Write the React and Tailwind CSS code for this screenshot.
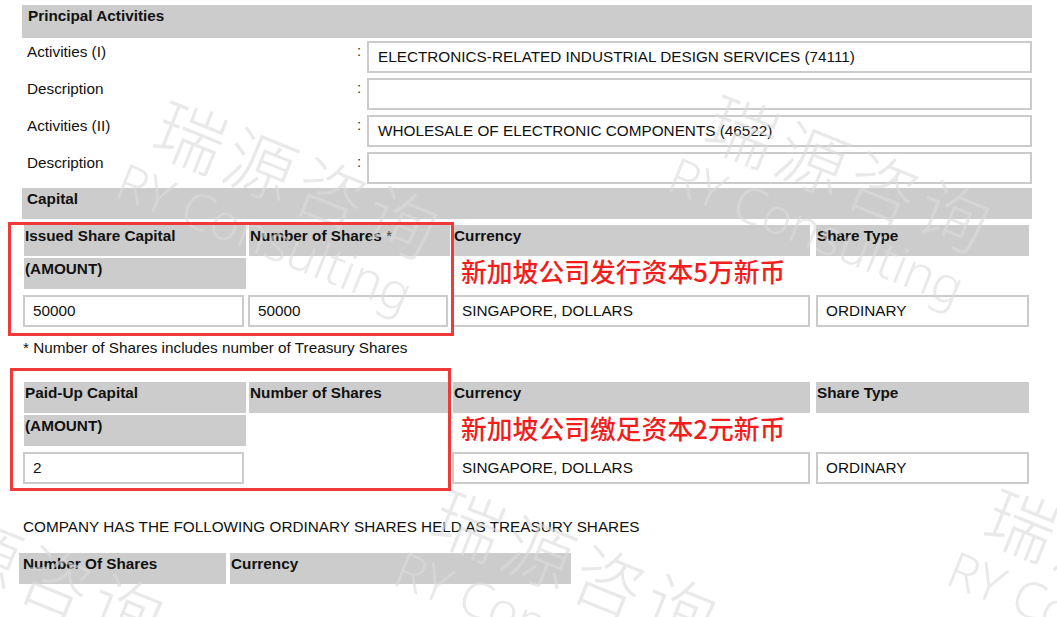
import React from 'react';

const FONT = { fontFamily: '"Liberation Sans", Arial, sans-serif' };
const CJK = { fontFamily: '"Noto Sans CJK SC", "Noto Sans", sans-serif' };
const MARK = { fontFamily: '"Noto Sans", "Noto Sans CJK SC", sans-serif' };

const activities = [
  { label: 'Activities (I)', value: 'ELECTRONICS-RELATED INDUSTRIAL DESIGN SERVICES (74111)' },
  { label: 'Description', value: '' },
  { label: 'Activities (II)', value: 'WHOLESALE OF ELECTRONIC COMPONENTS (46522)' },
  { label: 'Description', value: '' },
];

const Head = ({ children, className = '' }) => (
  <div className={`bg-[#cccccc] h-[31px] pl-[1px] pt-[2px] text-[15.3px] font-bold leading-[18px] text-[#111] ${className}`}>
    {children}
  </div>
);

const Box = ({ children, className = '' }) => (
  <div className={`h-[32px] border-2 border-[#cbcbcb] bg-white flex items-center pl-[8px] text-[15.3px] text-[#111] ${className}`}>
    {children}
  </div>
);

// faint diagonal "瑞源咨询 / RY Consulting" stamp laid over the page
const Watermark = ({ className }) => (
  <div className={`absolute pointer-events-none select-none origin-top-left rotate-[22deg] text-[#dadada]/60 whitespace-nowrap ${className}`}>
    <div className="text-[70px] font-light leading-[70px] tracking-[6px]" style={CJK}>瑞源咨询</div>
    <div className="text-[50px] font-light leading-[50px] mt-[8px] -ml-[15px]" style={MARK}>RY Consulting</div>
  </div>
);

const CapitalTable = ({ title, sharesTitle, amount, shares, note, boxClass }) => (
  <div className="relative">
    <div className={`absolute border-[3px] border-[#f03a3a] pointer-events-none z-10 ${boxClass}`} />
    <div className="grid grid-cols-[222px_201px_357px_216px] gap-x-[3px] ml-[24px]">
      <Head>{title}</Head>
      <Head>{sharesTitle}</Head>
      <Head>Currency</Head>
      <Head className="ml-[3px]">Share Type</Head>

      <Head className="mt-[2px]">(AMOUNT)</Head>
      <div className="mt-[2px]" />
      <div className="mt-[2px] relative">
        <div className="absolute left-[8px] top-[-3px] whitespace-nowrap text-[25.8px] font-medium leading-[32px] text-[#f31d1d]" style={CJK}>
          {note}
        </div>
      </div>
      <div className="mt-[2px]" />

      <Box className="mt-[6px] -ml-[1px] mr-[2px]">{amount}</Box>
      {shares !== null ? <Box className="mt-[6px] -ml-[1px] mr-[2px]">{shares}</Box> : <div className="mt-[6px]" />}
      <Box className="mt-[6px] -ml-[1px]">SINGAPORE, DOLLARS</Box>
      <Box className="mt-[6px] ml-[3px]">ORDINARY</Box>
    </div>
  </div>
);

export default function App() {
  return (
    <div className="relative w-[1057px] h-[617px] overflow-hidden bg-white" style={FONT}>
      <div className="pt-[5px]">
        <div className="ml-[22px] w-[1010px]">
          <Head className="h-[33px] pl-[6px]">Principal Activities</Head>

          <div className="mt-[3px] flex flex-col gap-[5px]">
            {activities.map((a, i) => (
              <div key={i} className="flex h-[32px]">
                <div className="w-[335px] pl-[5px] pt-[2px] text-[15.3px] text-[#111] leading-[18px]">{a.label}</div>
                <div className="w-[10px] pt-[1px] text-[15px] text-[#333] leading-[18px]">:</div>
                <Box className="flex-1 pl-[9px]">{a.value}</Box>
              </div>
            ))}
          </div>

          <Head className="mt-[4px] h-[30px] pl-[5px]">Capital</Head>
        </div>

        <div className="mt-[6px]">
          <CapitalTable
            title="Issued Share Capital"
            sharesTitle={<span>Number of Shares <span className="font-normal text-[#444]">*</span></span>}
            amount="50000"
            shares="50000"
            note="新加坡公司发行资本5万新币"
            boxClass="left-[8px] top-[-3px] w-[446px] h-[114px]"
          />
        </div>

        <div className="ml-[23px] mt-[12px] text-[15.3px] leading-[18px] text-[#111]">
          * Number of Shares includes number of Treasury Shares
        </div>

        <div className="mt-[25px]">
          <CapitalTable
            title="Paid-Up Capital"
            sharesTitle="Number of Shares"
            amount="2"
            shares={null}
            note="新加坡公司缴足资本2元新币"
            boxClass="left-[10px] top-[-14px] w-[441px] h-[123px]"
          />
        </div>

        <div className="ml-[23px] mt-[34px] text-[15.3px] leading-[18px] text-[#111]">
          COMPANY HAS THE FOLLOWING ORDINARY SHARES HELD AS TREASURY SHARES
        </div>

        <div className="ml-[19px] mt-[17px] grid grid-cols-[207px_341px] gap-x-[4px]">
          <Head className="pl-[4px]">Number Of Shares</Head>
          <Head>Currency</Head>
        </div>
      </div>

      <Watermark className="left-[172px] top-[88px]" />
      <Watermark className="left-[724px] top-[82px]" />
      <Watermark className="left-[-103px] top-[476px]" />
      <Watermark className="left-[450px] top-[476px]" />
      <Watermark className="left-[1003px] top-[476px]" />
    </div>
  );
}
